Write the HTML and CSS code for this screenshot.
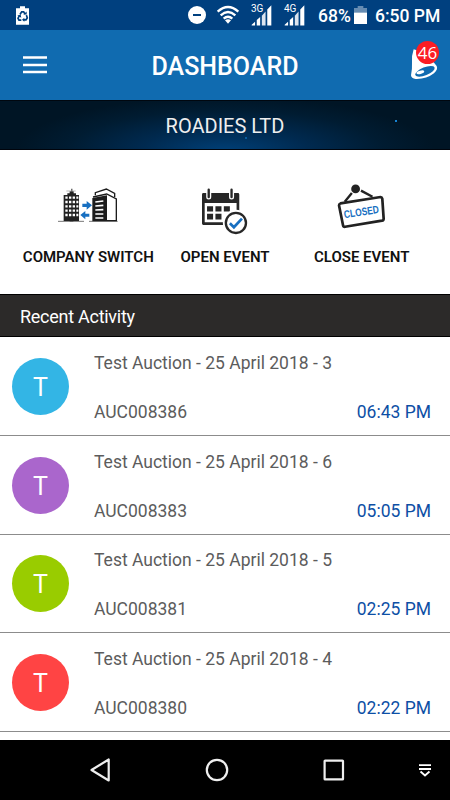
FILE: index.html
```html
<!DOCTYPE html>
<html lang="en">

<head>
    <meta charset="UTF-8">
    <meta name="viewport" content="width=device-width, initial-scale=1.0">
    <title>Dashboard</title>
    <link rel="stylesheet" href="styles.css">
</head>

<body>
    <div class="screen">
        <div class="status-bar">
            <svg class="saver" viewBox="0 0 39 56">
                <path d="M12 0h15v6h12v50H0V6h12z" fill="#fff" />
                <g fill="none" stroke="#00407f" stroke-width="5">
                    <path d="M12 25l5-8h6l4 7" />
                    <path d="M31 27l3 8-4 6h-8" />
                    <path d="M16 42H9l-3-6 4-7" />
                </g>
                <path d="M22 25h10V16zM25 35v12l-7-6zM4 28l10-2 2 9z" fill="#00407f" />
            </svg>
            <div class="status-right">
                <svg class="dnd" viewBox="0 0 18 18">
                    <circle cx="9" cy="9" r="9" fill="#fff" />
                    <path d="M5 9h8" stroke="#00407f" stroke-width="2" />
                </svg>
                <svg class="wifi" viewBox="0 0 66 54">
                    <g fill="none" stroke="#fff" stroke-width="7">
                        <path d="M2 17Q33-11 64 17" />
                        <path d="M11 28Q33 8 55 28" />
                        <path d="M20 38Q33 26 46 38" />
                    </g>
                    <path d="M24 43Q33 36 42 43L33 53z" fill="#fff" />
                </svg>
                <div class="signal">
                    <span>3G</span>
                    <svg viewBox="0 0 62 64">
                        <path d="M2 63V61L12 52V63zM17 63V47L27 38V63zM48 63V16L60 3V63z" fill="#fff" />
                        <path d="M32 63V34L43 22V63z" fill="#dce4ee" />
                    </svg>
                </div>
                <div class="signal">
                    <span>4G</span>
                    <svg viewBox="0 0 62 64">
                        <path d="M2 63V61L12 52V63zM17 63V47L27 38V63zM48 63V16L60 3V63z" fill="#fff" />
                        <path d="M32 63V34L43 22V63z" fill="#dce4ee" />
                    </svg>
                </div>
                <span class="percent">68%</span>
                <svg class="battery" viewBox="0 0 39 54">
                    <path d="M11 0h17v6h11v15H0V6h11z" fill="#668cb2" />
                    <path d="M0 20h39v34H0z" fill="#fff" />
                </svg>
                <span class="clock">6:50 PM</span>
            </div>
        </div>

        <header class="app-bar">
            <svg class="menu" viewBox="0 0 24 18">
                <path d="M0 1.5h24M0 9h24M0 16h24" stroke="#fff" stroke-width="2.6" />
            </svg>
            <h1>DASHBOARD</h1>
            <div class="bell">
                <svg viewBox="60 45 90 105">
                    <path d="M74 58Q67 78 69 98Q70 116 66 136Q67 146 80 147Q112 148 135 130Q148 118 143 108L112 70z" fill="#fff" />
                    <ellipse cx="108" cy="124" rx="31" ry="12" transform="rotate(-22 108 124)" fill="#106bb0" />
                    <ellipse cx="94" cy="127" rx="12" ry="5" transform="rotate(-15 94 127)" fill="#fff" />
                </svg>
                <span class="badge">46</span>
            </div>
        </header>

        <div class="company">
            <span>ROADIES LTD</span>
            <i class="spark spark-right"></i>
            <i class="spark spark-low"></i>
        </div>

        <nav class="actions">
            <a class="action">
                <svg class="icon-switch" viewBox="40 40 180 105">
                    <path d="M40 140h78M133 140h86" stroke="#777" stroke-width="3" />
                    <path d="M57 61h11v-5h7v-6h5v-8h3v8h4v6h7v5h9v78H57z" fill="#222" />
                    <path d="M65 49h28" stroke="#999" stroke-width="2" />
                    <path d="M62 69h39M62 82h39M62 95h39M62 108h39M62 121h39" stroke="#fff" stroke-width="7" stroke-dasharray="7 4" />
                    <path d="M75 130h11v10H75z" fill="#222" />
                    <path d="M113 87h13v-8l16 13-16 13v-8h-13zM134 117h-12v-8l-15 12 15 13v-8h12z" fill="#176fc1" />
                    <path d="M143 70l44-8v78h-44z" fill="#1c1c1c" />
                    <path d="M145 67l41-9 29 15v65h-28" fill="none" stroke="#1c1c1c" stroke-width="4" />
                    <path d="M152 62v-8l33-11 25 13v11" fill="none" stroke="#1c1c1c" stroke-width="4" />
                    <path d="M152 82l24-3M152 94l24-2M152 106l24-1M152 118h24M152 130h24" stroke="#fff" stroke-width="5" />
                </svg>
                <span>COMPANY SWITCH</span>
            </a>
            <a class="action">
                <svg class="icon-open" viewBox="36 38 140 140">
                    <path d="M43 57h103v87H43z" fill="none" stroke="#272727" stroke-width="8" stroke-linejoin="round" />
                    <path d="M42 57h105v26H42z" fill="#272727" />
                    <path d="M59 42v23M127 42v23" stroke="#fff" stroke-width="15" stroke-linecap="round" />
                    <path d="M59 43v22M127 43v22" stroke="#272727" stroke-width="7" stroke-linecap="round" />
                    <path d="M54 92h18v16H54zM79 92h18v16H79zM104 92h18v16h-18zM54 115h18v17H54zM79 115h18v17H79z" fill="#272727" />
                    <circle cx="140" cy="142" r="39" fill="#fff" />
                    <circle cx="140" cy="142" r="30" fill="#fff" stroke="#272727" stroke-width="7" />
                    <path d="M122 143l12 12 24-26" fill="none" stroke="#176fc1" stroke-width="8" />
                </svg>
                <span>OPEN EVENT</span>
            </a>
            <a class="action">
                <svg class="icon-close" viewBox="38 26 142 132">
                    <circle cx="93" cy="40" r="13" fill="#222" />
                    <path d="M82 52L61 78M109 45l34 18" stroke="#222" stroke-width="7" />
                    <path d="M48 83L167 64Q171 64 172 69L176 128Q176 133 171 134L62 152Q57 153 56 148L44 89Q44 84 48 83z" fill="#fff" stroke="#222" stroke-width="8" />
                    <text x="110" y="119" transform="rotate(-9 110 108)" textLength="104" lengthAdjust="spacingAndGlyphs">CLOSED</text>
                </svg>
                <span>CLOSE EVENT</span>
            </a>
        </nav>

        <h2>Recent Activity</h2>

        <div class="activity-list">
            <div class="activity">
                <div class="avatar blue">T</div>
                <div class="details">
                    <p>Test Auction - 25 April 2018 - 3</p>
                    <div class="meta"><span>AUC008386</span><span class="time">06:43 PM</span></div>
                </div>
            </div>
            <div class="activity">
                <div class="avatar purple">T</div>
                <div class="details">
                    <p>Test Auction - 25 April 2018 - 6</p>
                    <div class="meta"><span>AUC008383</span><span class="time">05:05 PM</span></div>
                </div>
            </div>
            <div class="activity">
                <div class="avatar green">T</div>
                <div class="details">
                    <p>Test Auction - 25 April 2018 - 5</p>
                    <div class="meta"><span>AUC008381</span><span class="time">02:25 PM</span></div>
                </div>
            </div>
            <div class="activity">
                <div class="avatar red">T</div>
                <div class="details">
                    <p>Test Auction - 25 April 2018 - 4</p>
                    <div class="meta"><span>AUC008380</span><span class="time">02:22 PM</span></div>
                </div>
            </div>
        </div>

        <div class="nav-bar">
            <svg class="nav-back" viewBox="0 0 20 24">
                <path d="M18.7 1.5v21L1.5 12z" fill="none" stroke="#eee" stroke-width="2.2" stroke-linejoin="round" />
            </svg>
            <svg class="nav-home" viewBox="0 0 24 24">
                <circle cx="12" cy="12" r="10.2" fill="none" stroke="#eee" stroke-width="2.2" />
            </svg>
            <svg class="nav-recent" viewBox="0 0 22 22">
                <rect x="1.6" y="1.6" width="18.4" height="18.8" rx=".5" fill="none" stroke="#eee" stroke-width="2.2" />
            </svg>
            <svg class="nav-hide" viewBox="0 0 12 13">
                <path d="M0 1.2h12M0 5h12M1.5 7.5l4.5 4 4.5-4" fill="none" stroke="#fff" stroke-width="1.8" />
            </svg>
        </div>
    </div>
</body>

</html>
```
FILE: styles.css
```css
* {
    box-sizing: border-box;
}

body {
    margin: 0;
    font-family: Roboto, sans-serif;
    background-color: #fff;
}

h1,
h2,
p {
    margin: 0;
    font-weight: 400;
}

svg {
    display: block;
    flex-shrink: 0;
    overflow: visible;
}

.screen {
    width: 450px;
    height: 800px;
    display: flex;
    flex-direction: column;
    overflow: hidden;
    white-space: nowrap;
}

/* Status bar */
.status-bar {
    height: 30px;
    padding: 0 11px 0 16px;
    display: flex;
    align-items: center;
    justify-content: space-between;
    background-color: #00407f;
    color: #fff;
    font-size: 17.5px;
    font-weight: 500;
}

.saver {
    width: 13px;
    height: 19px;
}

.status-right {
    display: flex;
    align-items: center;
}

.dnd {
    width: 18px;
    height: 18px;
}

.wifi {
    width: 22px;
    height: 18px;
    margin: 0 12px 0 11px;
}

.signal {
    position: relative;
    width: 21px;
    margin-right: 12px;
}

.signal svg {
    width: 21px;
    height: 22px;
}

.signal span {
    position: absolute;
    left: 0;
    top: 0;
    font-size: 10px;
    font-weight: 400;
    line-height: 9px;
}

.percent {
    width: 34px;
    margin-left: 1px;
    padding-top: 1px;
}

.battery {
    width: 13px;
    height: 18px;
    margin: 0 8px 0 2px;
}

.clock {
    width: 64px;
    padding-top: 1px;
}

/* App bar */
.app-bar {
    height: 70px;
    padding: 0 11px 0 23px;
    display: flex;
    align-items: center;
    justify-content: space-between;
    background-color: #106bb0;
}

.menu {
    width: 24px;
    height: 18px;
    margin-top: -1px;
}

h1 {
    color: #fff;
    font-size: 25px;
    font-weight: 500;
    padding: 2px 6px 0 0;
}

.bell {
    position: relative;
    width: 30px;
    height: 35px;
    margin-top: -5px;
}

.bell svg {
    width: 30px;
    height: 35px;
}

.badge {
    position: absolute;
    top: -4px;
    left: 7px;
    width: 23px;
    height: 23px;
    border-radius: 50%;
    background-color: #fb1d24;
    color: #fff;
    font-family: "Open Sans", sans-serif;
    font-size: 17px;
    line-height: 24px;
    text-align: center;
}

.company {
    position: relative;
    height: 50px;
    display: flex;
    align-items: center;
    justify-content: center;
    border-top: 1px solid #00070f;
    border-bottom: 1px solid #00040c;
    background: radial-gradient(ellipse 210px 55px at 50% 105%, #004078, #002a50 40%, #001c32 75%, #001525);
    color: #eee;
    font-size: 20px;
    padding-top: 2px;
}

.spark {
    position: absolute;
    width: 2px;
    height: 2px;
    background-color: #1683d2;
}

.spark-right {
    left: 395px;
    top: 19px;
}

.spark-low {
    left: 245px;
    top: 36px;
    background-color: #085c9e;
}

/* Actions */
.actions {
    height: 144px;
    padding: 0 20px;
    display: grid;
    grid-template-columns: repeat(3, 1fr);
}

.action {
    display: flex;
    flex-direction: column;
    align-items: center;
    justify-content: space-between;
    padding: 33px 0 27px;
    color: #111;
    font-size: 15px;
    font-weight: 600;
    line-height: 20px;
}

.icon-switch {
    width: 60px;
    height: 35px;
    margin-top: 5px;
}

.icon-open {
    width: 47px;
    height: 47px;
    margin-top: 5px;
}

.icon-close {
    width: 48px;
    height: 45px;
    margin: 1px 2px 0 0;
}

.icon-close text {
    font: 700 32px/1 "Liberation Sans", sans-serif;
    fill: #176fc1;
    text-anchor: middle;
}

h2 {
    height: 43px;
    padding: 1px 20px 0;
    border-top: 1px solid #000;
    border-bottom: 1px solid #000;
    background-color: #2c2a29;
    color: #fff;
    font-size: 18px;
    letter-spacing: -0.27px;
    line-height: 42px;
}

/* Activity list */
.activity-list {
    height: 403px;
    background-color: #fff;
}

.activity {
    height: 98.75px;
    padding: 0 19px 0 12px;
    display: flex;
    align-items: center;
    gap: 25px;
    border-bottom: 1px solid #8c8c8c;
}

.avatar {
    width: 57px;
    height: 57px;
    margin-top: 1px;
    border-radius: 50%;
    color: #fff;
    font-size: 25px;
    line-height: 59px;
    text-align: center;
}

.blue {
    background-color: #33b5e5;
}

.purple {
    background-color: #aa66cc;
}

.green {
    background-color: #99cc00;
}

.red {
    background-color: #ff4444;
}

.details {
    flex: 1;
    padding-top: 4px;
    color: #5c5c5c;
    font-size: 17.5px;
    line-height: 21px;
}

.meta {
    display: flex;
    justify-content: space-between;
    margin-top: 28px;
}

.time {
    color: #0d4fa5;
}

/* Navigation bar */
.nav-bar {
    height: 60px;
    padding: 0 19px 0 90px;
    display: flex;
    align-items: center;
    background-color: #000;
}

.nav-back {
    width: 20px;
    height: 24px;
    margin-right: 95px;
}

.nav-home {
    width: 24px;
    height: 24px;
    margin-right: 94px;
}

.nav-recent {
    width: 22px;
    height: 22px;
    margin-right: auto;
}

.nav-hide {
    width: 12px;
    height: 13px;
}
```
